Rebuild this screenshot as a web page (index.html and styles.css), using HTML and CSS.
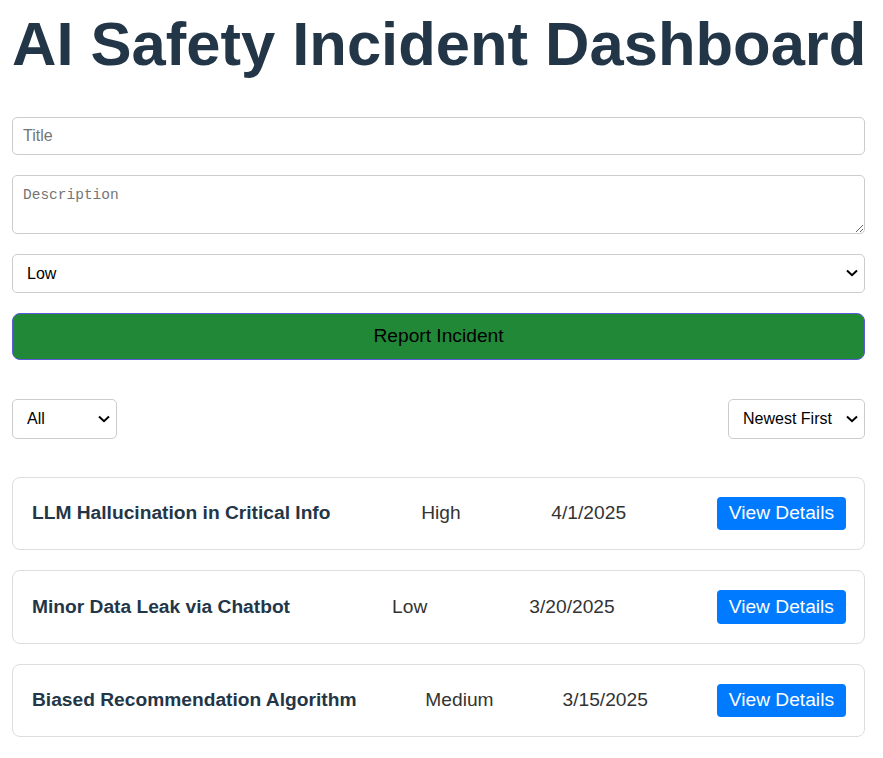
FILE: index.html
```html
<!DOCTYPE html>
<html lang="en">
<head>
<meta charset="utf-8">
<title>AI Safety Incident Dashboard</title>
<link rel="stylesheet" href="styles.css">
</head>
<body>
<div class="app">
  <h1 class="page-title">AI Safety Incident Dashboard</h1>
  <form class="report-form">
    <input class="field field-input" type="text" placeholder="Title">
    <textarea class="field field-textarea" placeholder="Description"></textarea>
    <div class="select-wrap">
      <select class="field field-select">
        <option>Low</option>
        <option>Medium</option>
        <option>High</option>
      </select>
      <svg class="chevron" width="12" height="8" viewBox="0 0 12 8" aria-hidden="true"><path d="M1 1.5 L6 6.2 L11 1.5" fill="none" stroke="#000" stroke-width="2"/></svg>
    </div>
    <button type="button" class="submit-btn">Report Incident</button>
  </form>
  <div class="controls">
    <div class="select-wrap">
      <select class="control-select filter-select">
        <option>All</option>
        <option>Low</option>
        <option>Medium</option>
        <option>High</option>
      </select>
      <svg class="chevron" width="12" height="8" viewBox="0 0 12 8" aria-hidden="true"><path d="M1 1.5 L6 6.2 L11 1.5" fill="none" stroke="#000" stroke-width="2"/></svg>
    </div>
    <div class="select-wrap">
      <select class="control-select sort-select">
        <option>Newest First</option>
        <option>Oldest First</option>
      </select>
      <svg class="chevron" width="12" height="8" viewBox="0 0 12 8" aria-hidden="true"><path d="M1 1.5 L6 6.2 L11 1.5" fill="none" stroke="#000" stroke-width="2"/></svg>
    </div>
  </div>
  <div class="incident-list">
    <div class="incident-card">
      <span class="incident-title">LLM Hallucination in Critical Info</span>
      <span class="incident-meta">High</span>
      <span class="incident-meta">4/1/2025</span>
      <button type="button" class="details-btn">View Details</button>
    </div>
    <div class="incident-card">
      <span class="incident-title">Minor Data Leak via Chatbot</span>
      <span class="incident-meta">Low</span>
      <span class="incident-meta">3/20/2025</span>
      <button type="button" class="details-btn">View Details</button>
    </div>
    <div class="incident-card">
      <span class="incident-title">Biased Recommendation Algorithm</span>
      <span class="incident-meta">Medium</span>
      <span class="incident-meta">3/15/2025</span>
      <button type="button" class="details-btn">View Details</button>
    </div>
  </div>
</div>
</body>
</html>
```
FILE: styles.css
```css
html, body {
  margin: 0;
  padding: 0;
  background: #ffffff;
}

body {
  font-family: "Liberation Sans", Arial, sans-serif;
  color: #333333;
}

.app {
  padding: 9px 18px 20px 12px;
}

.page-title {
  margin: 0 0 37px 0;
  font-size: 61.5px;
  font-weight: bold;
  color: #233648;
  line-height: 1.15;
  white-space: nowrap;
}

.report-form {
  display: flex;
  flex-direction: column;
  gap: 20px;
}

.field {
  box-sizing: border-box;
  width: 100%;
  margin: 0;
  border: 1px solid #cccccc;
  border-radius: 5px;
  background: #ffffff;
  padding: 0 10px;
  color: #000000;
}

.field-input {
  height: 38px;
  font-family: "Liberation Sans", Arial, sans-serif;
  font-size: 16px;
}

.field-input::placeholder {
  color: #757575;
}

.field-textarea {
  display: block;
  height: 59px;
  padding: 10px;
  font-family: "Liberation Mono", "DejaVu Sans Mono", monospace;
  font-size: 14.5px;
  line-height: 18px;
  resize: vertical;
}

.field-textarea::placeholder {
  color: #757575;
}

.select-wrap {
  position: relative;
  display: block;
}

.chevron {
  position: absolute;
  right: 7px;
  top: 50%;
  margin-top: -4px;
  pointer-events: none;
}

.field-select {
  display: block;
  height: 39px;
  font-family: "Liberation Sans", Arial, sans-serif;
  font-size: 16px;
  padding: 0 28px 0 14px;
  appearance: none;
  -webkit-appearance: none;
}

.submit-btn {
  box-sizing: border-box;
  width: 100%;
  height: 47px;
  margin: 0;
  background: #218838;
  border: 1px solid #5b5bd8;
  border-radius: 8px;
  color: #000000;
  font-family: "Liberation Sans", Arial, sans-serif;
  font-size: 19.2px;
  cursor: pointer;
}

.controls {
  display: flex;
  justify-content: space-between;
  align-items: center;
  margin-top: 39px;
}

.control-select {
  display: block;
  box-sizing: border-box;
  height: 40px;
  margin: 0;
  border: 1px solid #cccccc;
  border-radius: 5px;
  background: #ffffff;
  color: #000000;
  font-family: "Liberation Sans", Arial, sans-serif;
  font-size: 16px;
  padding: 0 26px 0 14px;
  appearance: none;
  -webkit-appearance: none;
}

.filter-select {
  width: 105px;
}

.sort-select {
  width: 137px;
}

.incident-list {
  display: flex;
  flex-direction: column;
  gap: 20px;
  margin-top: 38px;
}

.incident-card {
  display: flex;
  justify-content: space-between;
  align-items: center;
  padding: 19px 18px 19px 19px;
  border: 1px solid #dddddd;
  border-radius: 8px;
  font-size: 19.2px;
}

.incident-title {
  font-weight: bold;
  color: #233648;
}

.incident-meta {
  color: #333333;
}

.details-btn {
  margin: 0;
  padding: 0 12px;
  height: 33.4px;
  background: #007bff;
  color: #ffffff;
  border: none;
  border-radius: 4px;
  font-family: "Liberation Sans", Arial, sans-serif;
  font-size: 19.2px;
  cursor: pointer;
}
```
